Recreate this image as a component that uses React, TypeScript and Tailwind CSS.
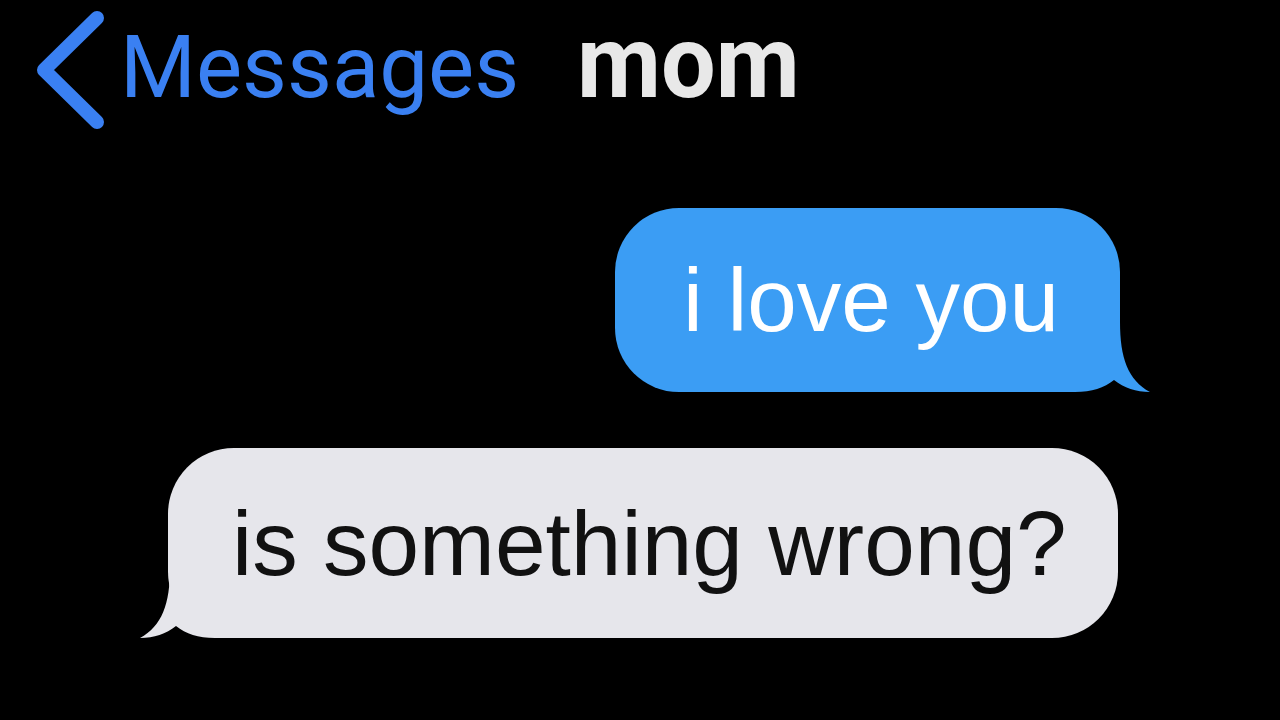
import React from "react";

const Chevron = () => (
  <svg width="72" height="118" viewBox="0 0 72 118" className="shrink-0 self-center">
    <path
      d="M63 7 L10 59 L63 111"
      fill="none"
      stroke="#3a80f2"
      strokeWidth="14"
      strokeLinecap="round"
      strokeLinejoin="round"
    />
  </svg>
);

// tail that covers the bottom-right corner of the sent bubble
const BlueTail = () => (
  <svg
    width="100"
    height="70"
    viewBox="0 0 100 70"
    className="absolute bottom-0 right-[-30px]"
  >
    <path
      d="M0 0 H70 C70 36 78 58 100 70 C86 70 74 66 64 58 C54 66 42 70 25 70 H0 Z"
      fill="#3b9df4"
    />
  </svg>
);

// tail that covers the bottom-left corner of the received bubble
const GrayTail = () => (
  <svg
    width="100"
    height="70"
    viewBox="0 0 100 70"
    className="absolute bottom-0 left-[-28px]"
  >
    <path
      d="M100 0 H30 C30 36 22 58 0 70 C14 70 26 66 36 58 C46 66 58 70 75 70 H100 Z"
      fill="#e6e6eb"
    />
  </svg>
);

const App: React.FC = () => {
  return (
    <main className="w-full h-[720px] bg-black overflow-hidden flex flex-col">
      {/* Header */}
      <div className="flex items-baseline pl-[34px] pt-[11px]">
        <Chevron />
        <span className="ml-[14px] text-[87px] leading-none text-[#3a80f2] font-['Roboto',sans-serif]">
          Messages
        </span>
        <span className="ml-[58px] text-[102px] leading-none font-bold text-[#e8e8e8] font-['Roboto',sans-serif] scale-x-[0.95] origin-left inline-block">
          mom
        </span>
      </div>

      {/* Sent bubble */}
      <div className="self-end mr-[160px] mt-[79px] relative">
        <div className="w-[505px] h-[184px] rounded-[64px] bg-[#3b9df4] flex items-center pl-[68px]">
          <span className="relative z-10 text-[89px] leading-none text-white font-['Liberation_Sans',Arial,sans-serif]">
            i love you
          </span>
        </div>
        <BlueTail />
      </div>

      {/* Received bubble */}
      <div className="ml-[168px] mt-[56px] relative w-[950px]">
        <div className="h-[190px] rounded-[66px] bg-[#e6e6eb] flex items-center pl-[64px]">
          <span className="relative z-10 text-[91px] leading-none text-[#111111] font-['Liberation_Sans',Arial,sans-serif]">
            is something wrong?
          </span>
        </div>
        <GrayTail />
      </div>
    </main>
  );
};

export default App;
